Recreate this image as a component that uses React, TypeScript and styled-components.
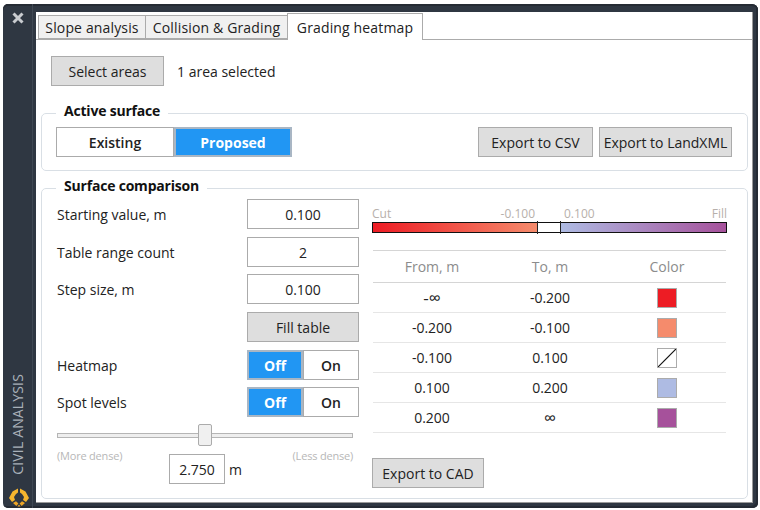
import React from "react";
import styled, { createGlobalStyle } from "styled-components";

const Global = createGlobalStyle`
  html, body { margin: 0; padding: 0; background: #fff; }
  body { width: 760px; height: 510px; overflow: hidden; font-family: "Open Sans", "Noto Sans", sans-serif; font-size: 14px; color: #111; }
  * { box-sizing: border-box; }
`;
const Frame = styled.div`
  margin: 4px 0 0 3px; width: 755px; height: 504px; display: flex; background: #2f3742; border-radius: 5px 6px 5px 5px;
  box-shadow: inset -2px -2px 0 #252b34, inset 0 2px 0 #252b34; overflow: hidden;
`;
const Side = styled.aside`
  width: 30px; display: flex; flex-direction: column; align-items: center; justify-content: space-between; padding: 8px 0 1px; border-right: 1px solid #3f4853;
`;
const Close = styled.svg`width: 12px; height: 12px; display: block;`;
const SideBottom = styled.div`display: flex; flex-direction: column; align-items: center; gap: 13px;`;
const SideTitle = styled.div`
  writing-mode: vertical-rl; transform: rotate(180deg); color: #a9b0b9; font-size: 14px; line-height: 16px; white-space: nowrap; letter-spacing: 0.15px;
`;
const Logo = styled.svg`width: 20px; height: 19px; display: block; margin-left: 2px;`;
const Main = styled.main`
  margin: 8px 5px 5px 3px; flex: 1; background: #fff; display: flex; flex-direction: column; min-width: 0;
  border-right: 1px solid #9a9a9a; border-bottom: 1px solid #9a9a9a;
`;
const Tabs = styled.div`display: flex; height: 28px; padding: 1px 0 0 3px; border-bottom: 1px solid #ababab; align-items: flex-end;`;
const Tab = styled.div<{ $active?: boolean; $width: number }>`
  height: ${p => (p.$active ? "27px" : "24px")}; margin-bottom: ${p => (p.$active ? "-1px" : "0")};
  background: ${p => (p.$active ? "#fff" : "#f0f0f0")}; border: 1px solid #ababab; border-bottom: ${p => (p.$active ? "none" : "1px solid #ababab")};
  margin-left: -1px; width: ${p => p.$width}px; display: flex; align-items: center; justify-content: center; font-size: 14px; letter-spacing: 0.15px; color: #222; white-space: nowrap;
`;
const Body = styled.div`flex: 1; padding: 16px 4px 0 5px; display: flex; flex-direction: column;`;
const TopRow = styled.div`display: flex; align-items: center; gap: 13px; padding-left: 10px; height: 30px;`;
const Btn = styled.button<{ $w: number }>`
  width: ${p => p.$w}px; height: 30px; background: #dedede; border: 1px solid #ababab; padding: 0; font: inherit; font-size: 14px; color: #222; white-space: nowrap;
`;
const Txt = styled.span`color: #222;`;
const Group = styled.section<{ $h: number; $mt: number }>`
  height: ${p => p.$h}px; margin-top: ${p => p.$mt}px; border: 1px solid #d9dfe5; border-radius: 5px; padding: 0 15px 0 14px;
`;
const Legend = styled.div`
  margin: -13px 0 0 0; padding: 0 8px; width: fit-content; background: #fff; height: 20px; line-height: 20px; font-weight: 700; font-size: 14px; letter-spacing: -0.2px; color: #111;
`;
const SurfaceRow = styled.div`display: flex; justify-content: space-between; margin-top: 6px;`;
const Seg = styled.div`display: flex;`;
const SegBtn = styled.div<{ $on?: boolean; $w: number }>`
  width: ${p => p.$w}px; height: 30px; display: flex; align-items: center; justify-content: center; font-weight: ${p => (p.$on ? 700 : 600)}; font-size: 14px;
  background: ${p => (p.$on ? "#2196f3" : "#fff")}; color: ${p => (p.$on ? "#fff" : "#222")}; border: ${p => (p.$on ? "2px solid #a9b6c4" : "1px solid #ababab")};
`;
const ExportBtns = styled.div`display: flex; gap: 6px;`;
const Columns = styled.div`display: flex; gap: 13px; margin-top: 3px; padding-left: 1px;`;
const Left = styled.div`width: 302px; display: flex; flex-direction: column;`;
const Row = styled.div<{ $mb: number }>`display: flex; align-items: center; justify-content: space-between; height: 30px; margin-bottom: ${p => p.$mb}px;`;
const Input = styled.div<{ $w?: number }>`
  width: ${p => p.$w ?? 112}px; height: 30px; border: 1px solid #ababab; background: #fff; display: flex; align-items: center; justify-content: center; font-size: 14px; color: #222;
`;
const Slider = styled.div`position: relative; height: 22px; display: flex; align-items: center; width: 296px;`;
const Track = styled.div`width: 100%; height: 5px; background: #eee; border: 1px solid #b5b5b5;`;
const Thumb = styled.div`position: absolute; left: 141px; top: 0; width: 14px; height: 22px; background: #f0f0f0; border: 1px solid #ababab; border-radius: 2px;`;
const DensityRow = styled.div`display: flex; justify-content: space-between; width: 296px; font-size: 11px; letter-spacing: -0.2px; color: #b7b7b7; height: 15px; line-height: 15px; margin-top: 2px;`;
const ValueRow = styled.div`display: flex; align-items: center; gap: 4px; margin: -9px 0 0 112px; height: 30px;`;
const Right = styled.div`width: 355px; padding-top: 7px;`;
const ScaleLabels = styled.div`display: grid; grid-template-columns: 128px 35px 1fr auto; font-size: 12px; color: #b7b0ab; height: 16px; line-height: 16px;`;
const MidLeft = styled.span`text-align: right; white-space: nowrap; justify-self: end;`;
const MidRight = styled.span`white-space: nowrap; margin-left: 29px;`;
const Bar = styled.div`display: flex; height: 11px; width: 355px; border: 1px solid #111;`;
const BarCut = styled.div`width: 164px; background: linear-gradient(90deg, #ed1c24, #f58b6c);`;
const BarMid = styled.div`width: 24px; background: #fff; position: relative; border-left: 1px solid #111; border-right: 1px solid #555;
  &::before, &::after { content: ""; position: absolute; top: -2px; height: 13px; width: 1px; background: #222; }
  &::before { left: -1px; } &::after { right: -1px; }
`;
const BarFill = styled.div`flex: 1; background: linear-gradient(90deg, #aebbe3, #a6519b);`;
const Table = styled.div`width: 353px; margin: 17px 0 0 1px; border-top: 1px solid #d5d5d5;`;
const THead = styled.div`display: grid; grid-template-columns: 118px 118px 116px; height: 32px; align-items: center; justify-items: center; color: #8c8c8c; border-bottom: 1px solid #d5d5d5;`;
const TRow = styled.div`display: grid; grid-template-columns: 118px 118px 116px; height: 30px; align-items: center; justify-items: center; color: #222; border-bottom: 1px solid #e6e6e6;`;
const Cell = styled.span<{ $inf?: boolean }>`font-size: ${p => (p.$inf ? "17px" : "14px")}; line-height: 20px;`;
const Swatch = styled.div<{ $c: string }>`width: 20px; height: 20px; border: 1px solid #ababab; background: ${p => p.$c};`;
const NoColor = styled.svg`width: 20px; height: 20px; display: block; border: 1px solid #ababab;`;
const CadWrap = styled.div`margin-top: 25px;`;

const rows: [string, string, string | null][] = [
  ["-∞", "-0.200", "#ed1c24"],
  ["-0.200", "-0.100", "#f58b6c"],
  ["-0.100", "0.100", null],
  ["0.100", "0.200", "#aebbe3"],
  ["0.200", "∞", "#a6519b"],
];

export default function App() {
  return (
    <>
      <Global />
      <Frame>
        <Side>
          <Close viewBox="0 0 12 12"><path d="M1.5 1.5 10.5 10.5M10.5 1.5 1.5 10.5" stroke="#c9ccd0" strokeWidth="3" /></Close>
          <SideBottom>
            <SideTitle>CIVIL ANALYSIS</SideTitle>
            <Logo viewBox="0 0 20 19">
              <path d="M9 0.5 3.5 3.5 0 10 3 14 6 12 5 9 7 6 9 4.5Z" fill="#f5b52e" />
              <path d="M11 0.5 16.5 3.5 20 10 17 14 14 12 15 9 13 6 11 4.5Z" fill="#f5b52e" />
              <path d="M4 15 7 13.2 9.4 15.6 7.4 18Z" fill="#eda526" />
              <path d="M16 15 13 13.2 10.6 15.6 12.6 18Z" fill="#eda526" />
              <path d="M10 16.4 11.6 18.4H8.4Z" fill="#eda526" />
            </Logo>
          </SideBottom>
        </Side>
        <Main>
          <Tabs>
            <Tab $width={108}>Slope analysis</Tab>
            <Tab $width={143}>Collision &amp; Grading</Tab>
            <Tab $width={136} $active>Grading heatmap</Tab>
          </Tabs>
          <Body>
            <TopRow>
              <Btn $w={113}>Select areas</Btn>
              <Txt>1 area selected</Txt>
            </TopRow>
            <Group $h={58} $mt={27}>
              <Legend>Active surface</Legend>
              <SurfaceRow>
                <Seg>
                  <SegBtn $w={118}>Existing</SegBtn>
                  <SegBtn $w={118} $on>Proposed</SegBtn>
                </Seg>
                <ExportBtns>
                  <Btn $w={115}>Export to CSV</Btn>
                  <Btn $w={133}>Export to LandXML</Btn>
                </ExportBtns>
              </SurfaceRow>
            </Group>
            <Group $h={311} $mt={17}>
              <Legend>Surface comparison</Legend>
              <Columns>
                <Left>
                  <Row $mb={8}><Txt>Starting value, m</Txt><Input>0.100</Input></Row>
                  <Row $mb={7}><Txt>Table range count</Txt><Input>2</Input></Row>
                  <Row $mb={8}><Txt>Step size, m</Txt><Input>0.100</Input></Row>
                  <Row $mb={8}><span /><Btn $w={112}>Fill table</Btn></Row>
                  <Row $mb={7}>
                    <Txt>Heatmap</Txt>
                    <Seg><SegBtn $w={56} $on>Off</SegBtn><SegBtn $w={56}>On</SegBtn></Seg>
                  </Row>
                  <Row $mb={7}>
                    <Txt>Spot levels</Txt>
                    <Seg><SegBtn $w={56} $on>Off</SegBtn><SegBtn $w={56}>On</SegBtn></Seg>
                  </Row>
                  <Slider><Track /><Thumb /></Slider>
                  <DensityRow><span>(More dense)</span><span>(Less dense)</span></DensityRow>
                  <ValueRow><Input $w={56}>2.750</Input><Txt>m</Txt></ValueRow>
                </Left>
                <Right>
                  <ScaleLabels>
                    <span>Cut</span>
                    <MidLeft>-0.100</MidLeft>
                    <MidRight>0.100</MidRight>
                    <span>Fill</span>
                  </ScaleLabels>
                  <Bar><BarCut /><BarMid /><BarFill /></Bar>
                  <Table>
                    <THead><span>From, m</span><span>To, m</span><span>Color</span></THead>
                    {rows.map(([a, b, c]) => (
                      <TRow key={a}>
                        <Cell $inf={a.includes("∞")}>{a}</Cell>
                        <Cell $inf={b.includes("∞")}>{b}</Cell>
                        {c ? <Swatch $c={c} /> : (
                          <NoColor viewBox="0 0 18 18"><path d="M0 18 18 0" stroke="#111" strokeWidth="1.2" /></NoColor>
                        )}
                      </TRow>
                    ))}
                  </Table>
                  <CadWrap><Btn $w={112}>Export to CAD</Btn></CadWrap>
                </Right>
              </Columns>
            </Group>
          </Body>
        </Main>
      </Frame>
    </>
  );
}
